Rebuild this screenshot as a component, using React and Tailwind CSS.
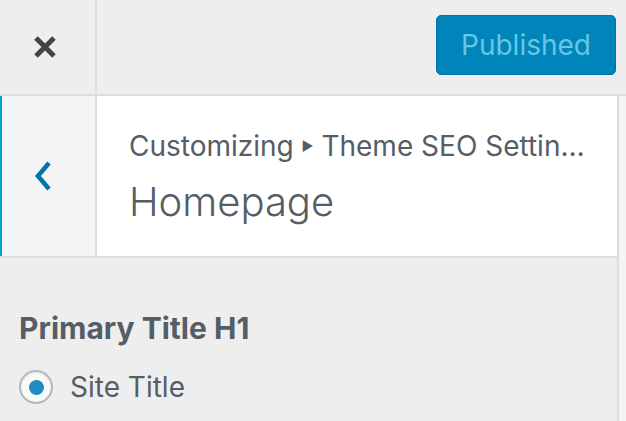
export default function App() {
  return (
    <div className="w-[626px] h-[421px] bg-[#eeeeee] overflow-hidden flex flex-col" style={{ fontFamily: 'Inter, "Liberation Sans", Arial, sans-serif' }}>
      {/* Top bar */}
      <div className="h-[96px] flex border-b-2 border-[#dddddd] shrink-0">
        <div className="w-[97px] border-r-2 border-[#dddddd] flex items-center justify-center pr-[6px]">
          <svg width="24" height="24" viewBox="0 0 24 24">
            <path d="M3 3 L21 21 M21 3 L3 21" stroke="#444444" strokeWidth="5" />
          </svg>
        </div>
        <div className="flex-1 flex justify-end pr-[10px] pt-[15px]">
          <div className="w-[180px] h-[60px] rounded-[5px] bg-[#0085ba] border border-[#0073aa] flex items-center justify-center text-[28px] text-[#66c6e4]">
            Published
          </div>
        </div>
      </div>
      {/* Body */}
      <div className="flex-1 flex">
        <div className="w-[617px] flex flex-col">
          <div className="h-[162px] bg-white border-b-2 border-[#dddddd] flex">
            <div className="w-[97px] bg-[#f3f4f5] border-l-2 border-[#00a0d2] border-r-2 border-r-[#dddddd] flex items-center pl-[30px]">
              <svg width="24" height="36" viewBox="0 0 24 36">
                <path d="M17 5 L6 18 L17 31" fill="none" stroke="#0073aa" strokeWidth="4.5" />
              </svg>
            </div>
            <div className="flex-1 pl-[32px] pt-[34px] pr-[28px] text-[#555d66] min-w-0">
              <div className="text-[28px] leading-[32px] whitespace-nowrap overflow-hidden">
                Customizing <span className="text-[13px] align-middle relative -top-[2px]">▶</span> Theme SEO Settin…
              </div>
              <div className="text-[40px] leading-[48px] mt-[14px]" style={{ fontWeight: 300 }}>
                Homepage
              </div>
            </div>
          </div>
          <div className="pl-[19px] pt-[54px] text-[#555d66]">
            <div className="text-[30px] font-bold leading-[32px]">Primary Title H1</div>
            <div className="flex items-center mt-[26px]">
              <div className="w-[34px] h-[34px] rounded-full border-2 border-[#b4b9be] bg-[#fafafa] flex items-center justify-center shadow-[inset_0_1px_2px_rgba(0,0,0,0.1)]">
                <div className="w-[15px] h-[15px] rounded-full bg-[#1e8cbe]"></div>
              </div>
              <div className="ml-[17px] text-[28px] leading-[32px]">Site Title</div>
            </div>
          </div>
        </div>
        <div className="w-[9px] border-l-2 border-[#dddddd] bg-[#f5f5f5]"></div>
      </div>
    </div>
  );
}
